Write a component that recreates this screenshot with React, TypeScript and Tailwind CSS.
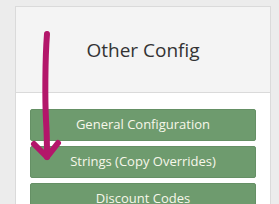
const buttons = ['General Configuration', 'Strings (Copy Overrides)', 'Discount Codes'];

export default function App() {
  return (
    <div className="relative h-[204px] w-[279px] overflow-hidden bg-[#ececec] pt-[6px] pl-[15px] font-['Open_Sans',sans-serif]">
      <div className="w-[256px] border border-[#dadada] bg-white">
        <div className="flex h-[86px] items-center justify-center border-b border-[#dadada] bg-[#f4f4f4] pt-[2px]">
          <h2 className="text-[19px] text-[#333]">Other Config</h2>
        </div>
        <div className="flex flex-col gap-[5px] px-[14px] pt-[16px] pb-4">
          {buttons.map((label) => (
            <button
              key={label}
              className="h-[32px] rounded-[2px] border border-[#659065] bg-[#6e9b6e] text-[13px] text-[#f7f7ea]"
            >
              {label}
            </button>
          ))}
        </div>
      </div>

      {/* hand-drawn annotation arrow */}
      <svg className="absolute top-0 left-0" width="279" height="204" viewBox="0 0 279 204">
        <path
          d="M47 34 C45 60 45 100 46 120 C47 135 47 148 47 157"
          fill="none"
          stroke="#b3166a"
          strokeWidth="6"
          strokeLinecap="round"
        />
        <path
          d="M34 144 L47 157 L58 143"
          fill="none"
          stroke="#b3166a"
          strokeWidth="6"
          strokeLinecap="round"
          strokeLinejoin="round"
        />
      </svg>
    </div>
  );
}
